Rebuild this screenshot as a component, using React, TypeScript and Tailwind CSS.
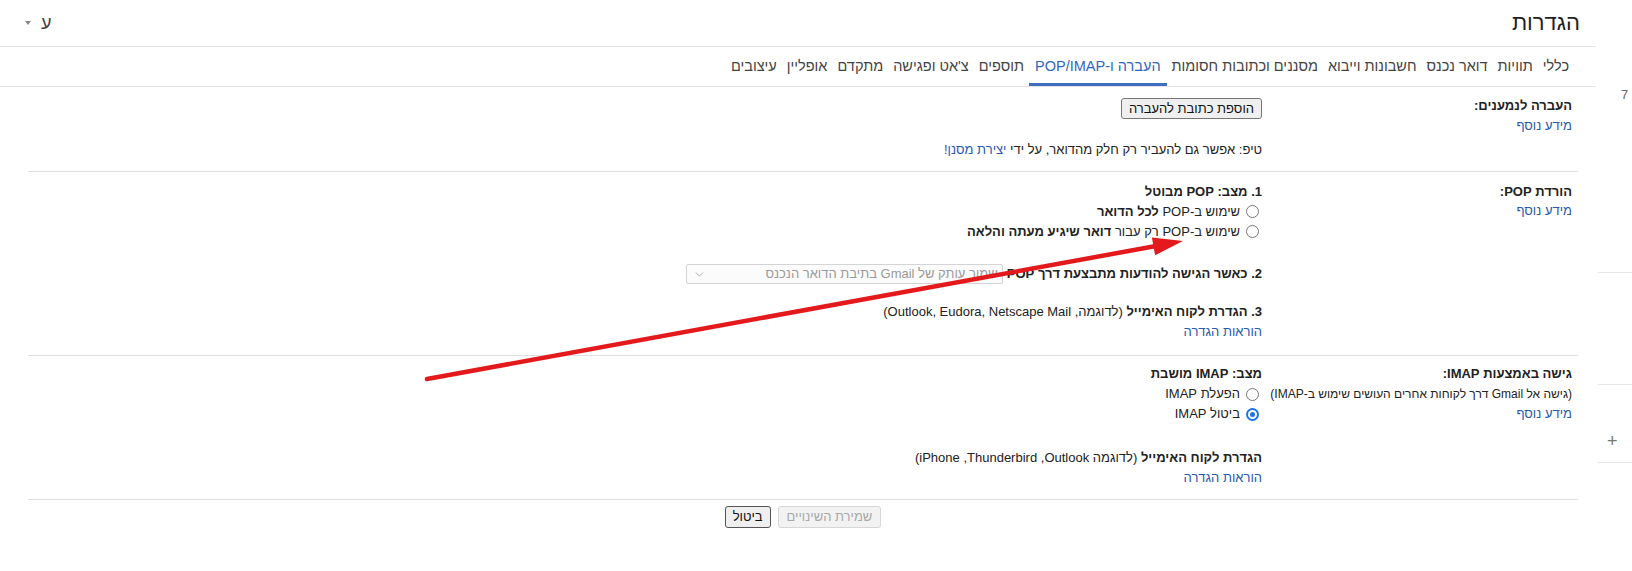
import { ChevronDown } from 'lucide-react'

const tabs = [
  'כללי',
  'תוויות',
  'דואר נכנס',
  'חשבונות וייבוא',
  'מסננים וכתובות חסומות',
  'העברה ו-POP/IMAP',
  'תוספים',
  "צ'אט ופגישה",
  'מתקדם',
  'אופליין',
  'עיצובים',
]

function Radio({ checked }: { checked?: boolean }) {
  if (checked) {
    return (
      <span className="w-[13px] h-[13px] rounded-full bg-[#1a73e8] flex items-center justify-center shrink-0">
        <span className="w-[9px] h-[9px] rounded-full border-2 border-white bg-[#1a73e8]" />
      </span>
    )
  }
  return <span className="w-[13px] h-[13px] rounded-full border border-[#767676] bg-white shrink-0" />
}

function RadioRow({ checked, children }: { checked?: boolean; children: React.ReactNode }) {
  return (
    <div className="flex items-center gap-[6px] pr-[3px] h-5">
      <Radio checked={checked} />
      <span>{children}</span>
    </div>
  )
}

function Link({ children }: { children: React.ReactNode }) {
  return <span className="text-[#2659b0] cursor-pointer">{children}</span>
}

export default function App() {
  return (
    <div
      dir="rtl"
      className="relative w-[1632px] h-[571px] overflow-hidden bg-white text-[#222] text-[13px] font-['Liberation_Sans',Arial,sans-serif] flex"
    >
      {/* right edge strip (partial side panel) */}
      <div dir="ltr" className="w-[36px] shrink-0 flex flex-col text-[#666]">
        <div className="h-[87px]" />
        <div className="h-4 leading-4 pl-[25px] text-[13px]">7</div>
        <div className="mt-[169px] h-px ml-[2px] bg-[#e6e6e6]" />
        <div className="mt-[111px] h-px ml-[2px] bg-[#e6e6e6]" />
        <div className="mt-[46px] h-5 leading-5 pl-[11px] text-[18px] font-light text-[#777]">+</div>
        <div className="mt-[11px] h-px ml-[2px] bg-[#e6e6e6]" />
      </div>

      {/* main settings area */}
      <div className="flex-1 flex flex-col">
        {/* header */}
        <div className="h-[47px] border-b border-[#e3e3e3] flex items-center justify-between pr-[16px] pl-[25px]">
          <h1 className="text-[22px] text-[#1f1f1f] leading-none">הגדרות</h1>
          <div className="flex items-center gap-[10px] text-[#444]">
            <span className="text-[18px] leading-none">ע</span>
            <span className="w-0 h-0 border-l-[3px] border-r-[3px] border-t-[4px] border-l-transparent border-r-transparent border-t-[#888]" />
          </div>
        </div>

        {/* tabs */}
        <div className="h-[40px] border-b border-[#e3e3e3] flex pr-[22px] text-[14.5px] text-[#444]">
          {tabs.map((t) => (
            <div
              key={t}
              className={
                t === 'העברה ו-POP/IMAP'
                  ? 'flex items-center px-[6px] border-b-[3px] border-[#3f6fc0] text-[#2f66c0] pt-[3px]'
                  : 'flex items-center px-[5px]'
              }
            >
              {t}
            </div>
          ))}
        </div>

        {/* content */}
        <div className="pl-[28px] pr-[18px]">
          {/* forwarding */}
          <section className="flex border-b border-[#e0e0e0] pt-[9px] pb-[11px] leading-5">
            <div className="w-[314px] shrink-0 pr-[6px]">
              <div className="font-bold">העברה לנמענים:</div>
              <Link>מידע נוסף</Link>
            </div>
            <div className="flex-1 pr-[2px]">
              <button className="mt-[2px] h-[21px] px-[7px] flex items-center border border-[#767676] rounded-[3px] bg-[#efefef] text-[13px] text-[#111]">
                הוספת כתובת להעברה
              </button>
              <div className="mt-[21px]">
                טיפ: אפשר גם להעביר רק חלק מהדואר, על ידי <Link>יצירת מסנן!</Link>
              </div>
            </div>
          </section>

          {/* POP */}
          <section className="flex border-b border-[#e0e0e0] pt-[10px] pb-[13px]">
            <div className="w-[314px] shrink-0 pr-[6px] leading-[19px]">
              <div className="font-bold">הורדת POP:</div>
              <Link>מידע נוסף</Link>
            </div>
            <div className="flex-1 pr-[2px]">
              <div className="leading-[19px] font-bold">1. מצב: POP מבוטל</div>
              <div className="leading-[19px]">
                <RadioRow>
                  שימוש ב-POP <b>לכל הדואר</b>
                </RadioRow>
                <RadioRow>
                  שימוש ב-POP רק עבור <b>דואר שיגיע מעתה והלאה</b>
                </RadioRow>
              </div>
              <div className="mt-[23px] flex items-center gap-[4px]">
                <span className="font-bold">2. כאשר הגישה להודעות מתבצעת דרך POP</span>
                <div className="w-[317px] h-[20px] border border-[#d4d4d4] rounded-[2px] bg-[#fbfbfb] flex items-center justify-between pr-[4px] pl-[6px] text-[#9a9a9a]">
                  <span>שמור עותק של Gmail בתיבת הדואר הנכנס</span>
                  <ChevronDown size={13} strokeWidth={1.5} className="text-[#999]" />
                </div>
              </div>
              <div className="mt-[18px] leading-5">
                <div>
                  <b>3. הגדרת לקוח האימייל</b> (לדוגמה, Outlook, Eudora, Netscape Mail)
                </div>
                <Link>הוראות הגדרה</Link>
              </div>
            </div>
          </section>

          {/* IMAP */}
          <section className="flex border-b border-[#e0e0e0] pt-[8px] pb-[11px] leading-5">
            <div className="w-[314px] shrink-0 pr-[6px]">
              <div className="font-bold">גישה באמצעות IMAP:</div>
              <div className="text-[12px] whitespace-nowrap">(גישה אל Gmail דרך לקוחות אחרים העושים שימוש ב-IMAP)</div>
              <Link>מידע נוסף</Link>
            </div>
            <div className="flex-1 pr-[2px]">
              <div className="font-bold">מצב: IMAP מושבת</div>
              <RadioRow>הפעלת IMAP</RadioRow>
              <RadioRow checked>ביטול IMAP</RadioRow>
              <div className="mt-[24px]">
                <b>הגדרת לקוח האימייל</b> (לדוגמה Outlook{'\u200F'}, Thunderbird{'\u200F'}, iPhone)
              </div>
              <Link>הוראות הגדרה</Link>
            </div>
          </section>

          {/* footer buttons */}
          <div className="flex justify-center gap-[7px] pt-[6px]">
            <button
              disabled
              className="h-[22px] px-[8px] border border-[#d6d6d6] rounded-[3px] bg-[#f2f2f2] text-[#a8a8a8] text-[13px]"
            >
              שמירת השינויים
            </button>
            <button className="h-[22px] px-[7px] border border-[#555] rounded-[3px] bg-[#efefef] text-[#111] text-[13px]">
              ביטול
            </button>
          </div>
        </div>
      </div>

      {/* red annotation arrow drawn over the page */}
      <svg
        className="absolute left-0 top-0 pointer-events-none"
        width="1632"
        height="571"
        viewBox="0 0 1632 571"
      >
        <line x1="427" y1="379" x2="1156" y2="246" stroke="#e3191c" strokeWidth="4.5" strokeLinecap="round" />
        <polygon points="1183,241 1155.1,255.3 1151.9,237.6" fill="#e3191c" />
      </svg>
    </div>
  )
}
